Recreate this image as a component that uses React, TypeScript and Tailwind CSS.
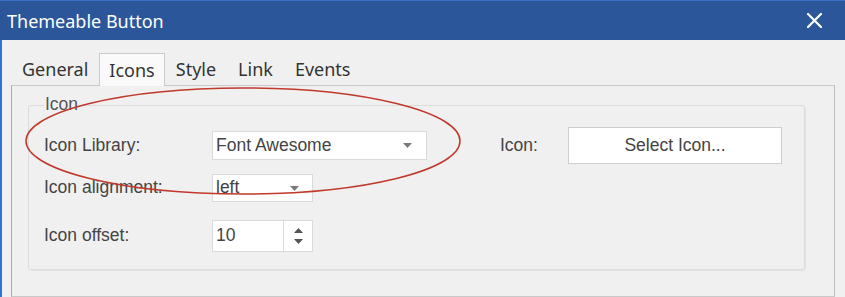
import type { ReactNode } from 'react';

const label = "font-['Liberation_Sans',Arial,sans-serif] text-[17.5px] leading-none text-[#444]";

const Caret = () => (
  <svg width="9" height="5" viewBox="0 0 9 5" className="shrink-0">
    <path d="M0 0 L9 0 L4.5 5 Z" fill="#7a7a7a" />
  </svg>
);

const Row = ({ name, children, className }: { name: string; children: ReactNode; className?: string }) => (
  <div className={`flex items-center ${className ?? ''}`}>
    <span className={`${label} w-[168px] shrink-0`}>{name}</span>
    {children}
  </div>
);

export default function App() {
  const tabs = ['General', 'Icons', 'Style', 'Link', 'Events'];

  return (
    <div className="relative w-[845px] h-[297px] overflow-hidden bg-[#f0f0f0] flex flex-col">
      {/* Title bar */}
      <div className="h-[40px] shrink-0 bg-[#2b579a] border-t border-[#3a6fc4] flex items-center justify-between pl-[7px] pr-[23px]">
        <span className="font-['Noto_Sans',sans-serif] text-[18px] text-white leading-none">Themeable Button</span>
        <svg width="15" height="15" viewBox="0 0 15 15">
          <path d="M1 1 L14 14 M14 1 L1 14" stroke="white" strokeWidth="2.2" strokeLinecap="square" />
        </svg>
      </div>

      <div className="flex-1 flex flex-col border-l-2 border-[#2e74d0]">
        {/* Tabs */}
        <div className="flex items-end h-[45px] pl-[9px] font-['Noto_Sans',sans-serif] text-[18px] text-[#333]">
          {tabs.map((t) =>
            t === 'Icons' ? (
              <div
                key={t}
                className="relative z-10 -mb-px h-[33px] px-[9px] flex items-center bg-[#fafafa] border border-b-0 border-[#c9c9c9]"
              >
                {t}
              </div>
            ) : (
              <div key={t} className="h-[31px] px-[11px] flex items-center">
                {t}
              </div>
            )
          )}
        </div>

        {/* Tab panel */}
        <div className="flex-1 ml-[9px] mr-[10px] border border-[#c9c9c9] border-l-[#a9a9a9] border-r-[#bdbdbd] bg-[#f0f0f0] pt-[9px] pl-[16px] pr-[29px]">
          <fieldset className="border border-[#dcdcdc] rounded-[3px] shadow-[1px_1px_0_#e4e4e4] pl-[15px] pr-[15px] pb-[17px]">
            <legend className={`${label} text-[#555] px-[1px] h-[20px] flex items-center`}>Icon</legend>

            <div className="pt-[12px]">
              <Row name="Icon Library:" className="h-[37px]">
                <div className="w-[215px] h-[29px] bg-white border border-[#dadada] flex items-center justify-between pl-[3px] pr-[14px]">
                  <span className={`${label} text-[#333]`}>Font Awesome</span>
                  <Caret />
                </div>
                <span className={`${label} ml-[73px] w-[68px]`}>Icon:</span>
                <button className="w-[214px] h-[37px] bg-white border border-[#cfcfcf] flex items-center justify-center">
                  <span className={`${label} text-[#333]`}>Select Icon...</span>
                </button>
              </Row>

              <Row name="Icon alignment:" className="h-[28px] mt-[10px]">
                <div className="w-[101px] h-[28px] bg-white border border-[#dadada] flex items-center justify-between pl-[3px] pr-[13px]">
                  <span className={`${label} text-[#333]`}>left</span>
                  <Caret />
                </div>
              </Row>

              <Row name="Icon offset:" className="h-[32px] mt-[18px]">
                <div className="flex h-[32px]">
                  <div className="w-[72px] h-full bg-white border border-[#dadada] flex items-center pl-[3px]">
                    <span className={`${label} text-[#333]`}>10</span>
                  </div>
                  <div className="w-[29px] h-full bg-white border border-l-0 border-[#dadada] flex flex-col items-center justify-center gap-[6px]">
                    <svg width="9" height="5" viewBox="0 0 9 5">
                      <path d="M0 5 L9 5 L4.5 0 Z" fill="#555" />
                    </svg>
                    <svg width="9" height="5" viewBox="0 0 9 5">
                      <path d="M0 0 L9 0 L4.5 5 Z" fill="#555" />
                    </svg>
                  </div>
                </div>
              </Row>
            </div>
          </fieldset>
        </div>
      </div>

      {/* Red annotation ellipse */}
      <svg className="absolute left-0 top-0 pointer-events-none" width="845" height="297">
        <ellipse cx="243" cy="141" rx="217" ry="53" fill="none" stroke="#c0392b" strokeWidth="1.5" />
      </svg>
    </div>
  );
}
